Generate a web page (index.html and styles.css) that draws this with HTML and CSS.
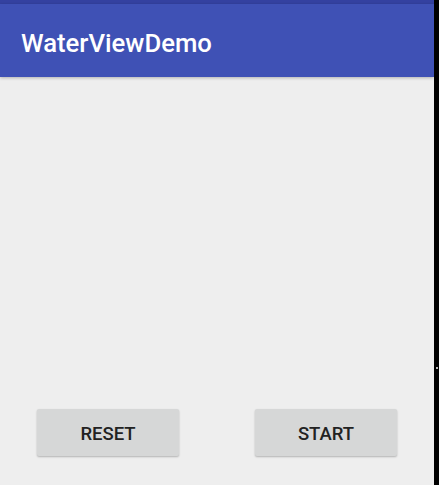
FILE: index.html
```html
<!DOCTYPE html>
<html>
<head>
<meta charset="utf-8">
<link rel="stylesheet" href="styles.css">
</head>
<body>
<div class="screen">
  <div class="device">
    <div class="status-bar"></div>
    <header class="app-bar"><h1 class="title">WaterViewDemo</h1></header>
    <main class="content">
      <div class="water"></div>
      <div class="actions">
        <button class="btn btn-reset">RESET</button>
        <button class="btn btn-start">START</button>
      </div>
    </main>
  </div>
  <div class="edge"><span class="edge-dot"></span></div>
</div>
</body>
</html>
```
FILE: styles.css
```css
html, body {
  margin: 0;
  padding: 0;
  height: 100%;
  background: #000;
}
.screen {
  display: flex;
  height: 485px;
  width: 439px;
}
.device {
  width: 434px;
  display: flex;
  flex-direction: column;
  background: #eeeeee;
  font-family: Roboto, "Liberation Sans", sans-serif;
}
.status-bar {
  height: 4px;
  background: #3441a0;
}
.app-bar {
  height: 73px;
  background: #3f51b5;
  display: flex;
  align-items: center;
  padding-left: 21px;
  box-shadow: 0 1px 3px rgba(0,0,0,0.25);
  position: relative;
  z-index: 1;
}
.title {
  margin: 0;
  color: #ffffff;
  font-size: 25.7px;
  font-weight: 500;
  padding-top: 4px;
}
.content {
  flex: 1;
  display: flex;
  flex-direction: column;
}
.water {
  flex: 1;
}
.actions {
  display: flex;
  justify-content: space-between;
  padding: 0 37px 29px 37px;
}
.btn {
  width: 142px;
  height: 47px;
  border: none;
  border-radius: 2px;
  background: #d6d7d7;
  color: #222222;
  font-family: Roboto, "Liberation Sans", sans-serif;
  font-size: 18.5px;
  font-weight: 500;
  box-shadow: 0 1px 2px rgba(0,0,0,0.25);
  padding: 2px 0 0 0;
}
.edge {
  width: 5px;
  background: #000;
  position: relative;
}
.edge-dot {
  position: absolute;
  left: 2px;
  top: 367px;
  width: 2px;
  height: 2px;
  background: #bbb;
}
```
